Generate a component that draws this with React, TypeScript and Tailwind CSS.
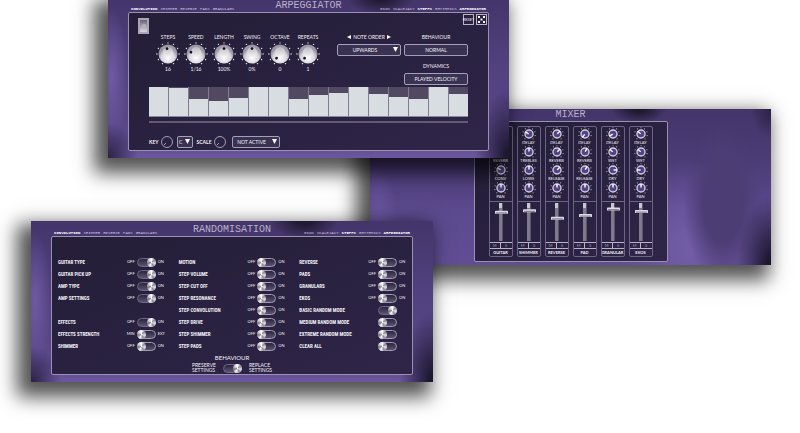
import type { ReactNode } from "react";

type Channel = { name: string; knobs: { label: string; angle: number }[]; level: number };
type SwitchRow = { label: string; on: boolean; off?: string; active?: string; bare?: boolean } | null;

const dials = [
  { label: "STEPS", value: "16", angle: -10 },
  { label: "SPEED", value: "1/16", angle: -70 },
  { label: "LENGTH", value: "100%", angle: 0 },
  { label: "SWING", value: "0%", angle: 0 },
  { label: "OCTAVE", value: "0", angle: -140 },
  { label: "REPEATS", value: "1", angle: -140 },
];

const steps = [100, 96, 57, 52, 63, 100, 100, 60, 72, 78, 100, 75, 66, 60, 100, 75];

const channels: Channel[] = [
  { name: "GUITAR", level: 22, knobs: [{ label: "DELAY", angle: -60 }, { label: "REVERB", angle: -60 }, { label: "CONV", angle: -60 }, { label: "PAN", angle: 0 }] },
  { name: "SHIMMER", level: 18, knobs: [{ label: "DELAY", angle: -60 }, { label: "TREBLES", angle: 0 }, { label: "LOWS", angle: 0 }, { label: "PAN", angle: 0 }] },
  { name: "REVERSE", level: 37, knobs: [{ label: "DELAY", angle: 45 }, { label: "REVERB", angle: 45 }, { label: "RELEASE", angle: 45 }, { label: "PAN", angle: 0 }] },
  { name: "PAD", level: 30, knobs: [{ label: "DELAY", angle: -140 }, { label: "REVERB", angle: 30 }, { label: "RELEASE", angle: 30 }, { label: "PAN", angle: 0 }] },
  { name: "GRANULAR", level: 14, knobs: [{ label: "DELAY", angle: -120 }, { label: "WET", angle: -50 }, { label: "DRY", angle: 90 }, { label: "PAN", angle: 0 }] },
  { name: "EKOS", level: 20, knobs: [{ label: "DELAY", angle: -50 }, { label: "WET", angle: -50 }, { label: "DRY", angle: -90 }, { label: "PAN", angle: 0 }] },
];

const switchColumns: SwitchRow[][] = [
  [
    { label: "GUITAR TYPE", on: true },
    { label: "GUITAR PICK UP", on: true },
    { label: "AMP TYPE", on: true },
    { label: "AMP SETTINGS", on: true },
    null,
    { label: "EFFECTS", on: true },
    { label: "EFFECTS STRENGTH", on: false, off: "MIN", active: "EXT" },
    { label: "SHIMMER", on: false },
  ],
  [
    { label: "MOTION", on: false },
    { label: "STEP VOLUME", on: false },
    { label: "STEP CUT OFF", on: false },
    { label: "STEP RESONANCE", on: false },
    { label: "STEP CONVOLUTION", on: false },
    { label: "STEP DRIVE", on: false },
    { label: "STEP SHIMMER", on: false },
    { label: "STEP PADS", on: false },
  ],
  [
    { label: "REVERSE", on: false },
    { label: "PADS", on: false },
    { label: "GRANULARS", on: false },
    { label: "EKOS", on: false },
    { label: "BASIC RANDOM MODE", on: true, bare: true },
    { label: "MEDIUM RANDOM MODE", on: false, bare: true },
    { label: "EXTREME RANDOM MODE", on: false, bare: true },
    { label: "CLEAR ALL", on: false, bare: true },
  ],
];

const leftTabs = ["CONVOLUTION", "SHIMMER", "REVERSE", "PADS", "GRANULARS"];
const rightTabs = ["EKOS", "SCALEJACY", "STEPFX", "RHYTHMICS", "ARPEGGIATOR"];
const litTabs = ["CONVOLUTION", "STEPFX", "ARPEGGIATOR"];

function Tabs({ items }: { items: string[] }) {
  return (
    <nav className="flex gap-[3px] text-[4px] leading-[5px]">
      {items.map((tab) => (
        <a key={tab} href={`#${tab.toLowerCase()}`} className={litTabs.includes(tab) ? "font-bold text-white" : "text-[#cdc5de]"}>
          {tab}
        </a>
      ))}
    </nav>
  );
}

function Header({ title, tabs = true }: { title: string; tabs?: boolean }) {
  return (
    <header className="grid grid-cols-[1fr_auto_1fr] items-end px-[3px] font-['Liberation_Mono',monospace]">
      {tabs ? <Tabs items={leftTabs} /> : <span />}
      <h2 className="text-[10px] leading-3 text-[#b9b2c8]">{title}</h2>
      <div className="flex justify-end">{tabs && <Tabs items={rightTabs} />}</div>
    </header>
  );
}

function Frame({ className, children }: { className: string; children: ReactNode }) {
  return (
    <div className={`rounded-[2px] border border-[#9a90b0] bg-linear-to-br from-[#241e37] to-[#2f2549] ${className}`}>{children}</div>
  );
}

function Dial({ label, value, angle }: { label: string; value: string; angle: number }) {
  return (
    <label className="relative flex w-7 flex-col items-center">
      <span className="text-[5px] leading-2">{label}</span>
      <svg viewBox="0 0 24 24" className="mt-px size-6">
        {[-150, -120, -90, -60, -30, 0, 30, 60, 90, 120, 150].map((a) => (
          <circle key={a} cx="12" cy="0.9" r="0.7" fill="#e8e5ef" transform={`rotate(${a} 12 12)`} />
        ))}
        <circle cx="12" cy="12" r="9.5" fill="url(#dialBody)" />
        <circle cx="12" cy="10" r="5" fill="url(#dialCap)" />
        <circle cx="12" cy="6.6" r="1.4" fill="#16121f" transform={`rotate(${angle} 12 12)`} />
      </svg>
      <span className="-mt-px text-[5px] leading-2">{value}</span>
      <input type="range" min={-150} max={150} defaultValue={angle} className="absolute inset-0 size-full cursor-pointer opacity-0" />
    </label>
  );
}

function SmallKnob({ label, angle }: { label: string; angle: number }) {
  return (
    <label className="relative flex flex-col items-center">
      <svg viewBox="0 0 16 16" className="size-[14px]">
        {[-140, -105, -70, -35, 0, 35, 70, 105, 140].map((a) => (
          <circle key={a} cx="8" cy="0.8" r="0.6" fill="#cfc9dc" transform={`rotate(${a} 8 8)`} />
        ))}
        <circle cx="8" cy="8" r="4.6" fill="#54438a" stroke="#d3cfdc" strokeWidth="1.6" />
        <path d="M8 7.5V3.2" stroke="#fff" strokeWidth="1.6" transform={`rotate(${angle} 8 8)`} />
      </svg>
      <span className="text-[4px] leading-1">{label}</span>
      <input type="range" min={-150} max={150} defaultValue={angle} className="absolute inset-0 size-full cursor-pointer opacity-0" />
    </label>
  );
}

function ChannelStrip({ name, knobs, level }: Channel) {
  return (
    <section className="flex w-6 flex-col rounded-[2px] border border-[#6d6387]">
      <div className="border-b border-[#6d6387] pb-[2px]">
        {knobs.map((knob) => (
          <SmallKnob key={knob.label} {...knob} />
        ))}
      </div>
      <label className="relative flex h-10 justify-center py-px">
        <svg viewBox="0 0 22 38" className="h-[38px] w-[22px]">
          <rect x="9" width="4" height="38" fill="#807a8f" />
          <rect x="9" width="4" height="5" fill="#c9c6d0" />
          <rect x="12" width="1" height="38" fill="#5b5568" />
          <rect x="5" y={level * 0.4 - 1} width="13" height="3" rx="0.6" fill="#dedbe4" />
          <rect x="6" y={level * 0.4 + 0.6} width="11" height="1" fill="#77708a" />
        </svg>
        <input type="range" aria-label={`${name} level`} defaultValue={100 - level} className="absolute inset-0 size-full cursor-pointer opacity-0" />
      </label>
      <div className="grid grid-cols-2 divide-x divide-[#b9b2c8] border-y border-[#b9b2c8] text-[4px] leading-[5px] text-[#a79dbd]">
        <button type="button">M</button>
        <button type="button">S</button>
      </div>
      <h3 className="flex h-[7px] items-center justify-center text-[4px] leading-[7px] font-bold">{name}</h3>
    </section>
  );
}

function Toggle({ on, id, label }: { on: boolean; id: string; label?: string }) {
  return (
    <span className="relative flex h-[9px] w-[19px]">
      <input
        id={id}
        type="checkbox"
        aria-label={label}
        defaultChecked={on}
        className="peer h-[9px] w-[19px] appearance-none rounded-full border border-[#a39bb5] bg-linear-to-b from-[#2b2540] to-[#5c5570] checked:border-[#6f6785]"
      />
      <span className="pointer-events-none absolute top-0 left-0 size-[9px] rounded-full bg-[conic-gradient(#ffffff,#8b8696,#e8e6ec,#8b8696,#ffffff,#77727f,#d5d2da,#ffffff)] peer-checked:left-[10px]" />
    </span>
  );
}

function Select({ label, value, className }: { label: string; value: string; className: string }) {
  return (
    <span className={`relative flex h-3 ${className}`}>
      <select aria-label={label} defaultValue={value} className="size-full appearance-none rounded-[2px] border border-[#a79fb8] bg-[#3a3252] pr-2 text-center text-[5px] leading-[10px] [text-align-last:center]">
        <option>{value}</option>
      </select>
      <svg viewBox="0 0 6 6" className="pointer-events-none absolute top-[3px] right-[3px] size-[5px] fill-white">
        <path d="M0 0h6L3 6z" />
      </svg>
    </span>
  );
}

function RingKnob({ label }: { label: string }) {
  return (
    <label className="relative flex items-center gap-[2px] text-[5px] leading-3 font-bold">
      {label}
      <svg viewBox="0 0 12 12" className="size-3">
        <circle cx="6" cy="6" r="5.5" fill="#2b2343" stroke="#c4bed1" strokeWidth="0.8" />
        <path d="M3 9l2-2" stroke="#c4bed1" strokeWidth="0.8" />
      </svg>
      <input type="range" className="absolute inset-0 size-full cursor-pointer opacity-0" />
    </label>
  );
}

const windowShadow = "shadow-[-8px_9px_18px_6px_rgba(0,0,0,0.68)]";

const skin =
  "bg-[radial-gradient(ellipse_34px_18px_at_68%_0%,#211a33_20%,transparent),radial-gradient(ellipse_34px_70px_at_100%_100%,#1d1730_10%,transparent),radial-gradient(ellipse_30px_36px_at_0%_100%,#2a2144,transparent),radial-gradient(ellipse_16px_70px_at_1%_50%,#6f5aa3,transparent),linear-gradient(180deg,#43356a_0%,#50407d_40%,#5c4a8c_90%,#6c579f_100%)]";

const boxButton = "h-3 w-16 rounded-[2px] border border-[#a79fb8] bg-[#3a3252] text-[5px] leading-[10px]";

function Arpeggiator() {
  return (
    <section className={`absolute -top-[3px] left-[108px] w-[401px] px-5 pt-[3px] pb-[7px] ${skin} ${windowShadow}`}>
      <Header title="ARPEGGIATOR" />
      <Frame className="pb-[2px]">
        <div className="flex h-5 items-start justify-between pr-px pl-[9px]">
          <button type="button" aria-label="Power" className="mt-[5px] flex h-4 w-[11px] shrink-0 items-center justify-center border-2 border-[#aaa4b5] bg-linear-to-b from-[#6a6478] to-[#dcdae0]">
            <span className="size-1 rounded-full bg-[#b5b0bf]" />
          </button>
          <div className="flex gap-[2px] pt-px">
            <button type="button" className="flex size-[11px] items-center justify-center border border-[#b9b2c8] text-[4px] leading-[9px]">
              RESET
            </button>
            <button type="button" aria-label="Randomise" className="size-[11px] border border-[#b9b2c8]">
              <svg viewBox="0 0 9 9" className="size-full fill-white">
                <path d="M1 1h2v2H1zM6 1h2v2H6zM3.5 3.5h2v2h-2zM1 6h2v2H1zM6 6h2v2H6z" />
              </svg>
            </button>
          </div>
        </div>

        <div className="flex justify-between px-5">
          <div className="flex items-start pl-[5px]">
            {dials.map((dial) => (
              <Dial key={dial.label} {...dial} />
            ))}
          </div>
          <div className="flex gap-[3px]">
            <div className="flex w-16 flex-col gap-[3px]">
              <div className="flex items-center justify-center gap-[2px] text-[5px] leading-2">
                <svg viewBox="0 0 4 4" className="size-1 fill-white"><path d="M4 0v4L0 2z" /></svg>
                NOTE ORDER
                <svg viewBox="0 0 4 4" className="size-1 fill-white"><path d="M0 0v4l4-2z" /></svg>
              </div>
              <Select label="Note order" value="UPWARDS" className="w-16" />
            </div>
            <div className="flex flex-col items-center gap-[3px] text-[5px] leading-2">
              <span>BEHAVIOUR</span>
              <button type="button" className={boxButton}>NORMAL</button>
              <span className="mt-[3px]">DYNAMICS</span>
              <button type="button" className={boxButton}>PLAYED VELOCITY</button>
            </div>
          </div>
        </div>

        <div className="px-5 pt-[2px]">
          <div className="flex h-[30px] divide-x divide-[#837b90] border-b border-[#8f879c] bg-[#514962]">
            {steps.map((height, i) => (
              <label key={i} className="relative flex flex-1 items-end">
                <span className="block w-full bg-[#d8dde1]" style={{ height: `${height}%` }} />
                <input type="range" aria-label={`Step ${i + 1}`} defaultValue={height} className="absolute inset-0 size-full cursor-pointer opacity-0" />
              </label>
            ))}
          </div>
          <div className="mt-1 h-[2px] bg-[#625a70]" />
          <div className="mt-[13px] flex items-center gap-1">
            <RingKnob label="KEY" />
            <Select label="Key" value="C" className="w-4" />
            <RingKnob label="SCALE" />
            <Select label="Scale" value="NOT ACTIVE" className="ml-[2px] w-12" />
          </div>
        </div>
      </Frame>
    </section>
  );
}

function Mixer() {
  return (
    <section className={`absolute top-[109px] left-[370px] w-[401px] bg-[radial-gradient(ellipse_28px_14px_at_67%_0%,#1f1930_20%,transparent),radial-gradient(ellipse_34px_70px_at_100%_100%,#1d1730_10%,transparent),radial-gradient(ellipse_20px_30px_at_100%_0%,#2a2144,transparent),radial-gradient(ellipse_40px_80px_at_88%_60%,#4d3d75_50%,transparent),radial-gradient(ellipse_70px_90px_at_80%_90%,#735da8,transparent),radial-gradient(ellipse_20px_60px_at_2%_75%,#6b569f,transparent),linear-gradient(180deg,#43356a_0%,#4c3c77_35%,#5c4a8e_65%,#604d94_100%)] pb-[3px] ${windowShadow}`}>
      <Header title="MIXER" tabs={false} />
      <div className="flex justify-center">
        <Frame className="px-[14px] py-1">
          <div className="flex gap-1">
            {channels.map((channel) => (
              <ChannelStrip key={channel.name} {...channel} />
            ))}
          </div>
        </Frame>
      </div>
    </section>
  );
}

function Randomisation() {
  return (
    <section className={`absolute top-[221px] left-[31px] w-[402px] px-5 pt-[3px] pb-[7px] ${skin} ${windowShadow}`}>
      <Header title="RANDOMISATION" />
      <Frame className="px-[6px] pt-[19px] pb-px">
        <div className="grid grid-cols-3 gap-x-[14px]">
          {switchColumns.map((rows, c) => (
            <div key={c}>
              {rows.map((row, r) =>
                row ? (
                  <div key={row.label} className="flex h-3 items-center gap-[2px]">
                    <label htmlFor={`switch-${c}-${r}`} className="flex-1 font-['Roboto_Condensed','Open_Sans_Condensed','Roboto',sans-serif] text-[5px] leading-3 font-bold whitespace-nowrap">
                      {row.label}
                    </label>
                    {!row.bare && <span className="text-[4px] leading-3">{row.off ?? "OFF"}</span>}
                    <Toggle id={`switch-${c}-${r}`} on={row.on} />
                    <span className="w-[7px] text-[4px] leading-3">{!row.bare && (row.active ?? "ON")}</span>
                  </div>
                ) : (
                  <div key={r} className="h-3" />
                )
              )}
            </div>
          ))}
        </div>
        <h3 className="mt-[2px] text-center text-[6px] leading-2">BEHAVIOUR</h3>
        <div className="mt-px flex items-center justify-center gap-[7px] text-[5px] leading-[5px]">
          <span>PRESERVE<br />SETTINGS</span>
          <Toggle id="behaviour" on label="Replace settings" />
          <span>REPLACE<br />SETTINGS</span>
        </div>
      </Frame>
    </section>
  );
}

export default function App() {
  return (
    <main className="relative min-h-screen overflow-hidden bg-white font-['Lato',sans-serif] text-[#f4f2f8]">
      <svg className="absolute size-0" aria-hidden="true">
        <defs>
          <radialGradient id="dialBody" cx="0.5" cy="0.7">
            <stop offset="0" stopColor="#ffffff" />
            <stop offset="0.7" stopColor="#d9d6dc" />
            <stop offset="1" stopColor="#9d98a5" />
          </radialGradient>
          <linearGradient id="dialCap" x1="0" y1="0" x2="0" y2="1">
            <stop offset="0" stopColor="#bdb9c2" />
            <stop offset="1" stopColor="#f4f3f5" />
          </linearGradient>
        </defs>
      </svg>
      <Mixer />
      <Arpeggiator />
      <Randomisation />
    </main>
  );
}
